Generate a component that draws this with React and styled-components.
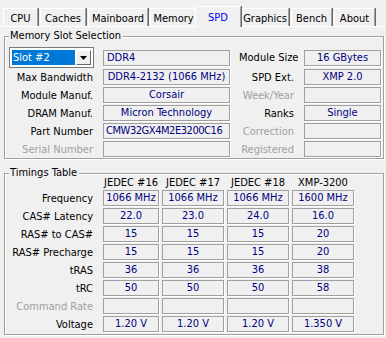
import React from 'react';
import styled, { createGlobalStyle } from 'styled-components';

const GlobalStyle = createGlobalStyle`
  html, body {
    margin: 0;
    padding: 0;
    background: #f0f0f0;
  }
  body {
    font-family: Tahoma, "DejaVu Sans Condensed", "Liberation Sans", sans-serif;
    font-size: 11px;
    color: #000;
  }
`;

const Window = styled.div`
  width: 386px;
  height: 338px;
  background: #f0f0f0;
  overflow: hidden;
`;

const TabBar = styled.div`
  display: flex;
  align-items: flex-end;
  height: 26px;
  padding-left: 3px;
`;

const Tab = styled.div`
  box-sizing: border-box;
  width: ${p => p.w}px;
  height: ${p => (p.active ? 21 : 18)}px;
  margin: ${p => (p.active ? '0 -2px -1px -2px' : '0 0 0 2px')};
  display: flex;
  align-items: center;
  justify-content: center;
  padding-top: ${p => (p.active ? 0 : 1)}px;
  border-top: 1px solid #fff;
  border-left: 1px solid #fff;
  border-right: 1px solid #a0a0a0;
  box-shadow: 1px 0 0 #696969;
  color: ${p => (p.active ? '#0000ff' : '#000')};
  background: #f0f0f0;
  position: relative;
  z-index: ${p => (p.active ? 2 : 1)};
  &:first-child {
    margin-left: 0;
  }
`;

const Panel = styled.div`
  border-top: 1px solid #fff;
  padding: 9px 2px 0 4px;
`;

const Group = styled.div`
  position: relative;
  border: 1px solid #a0a0a0;
  box-shadow: inset 1px 1px 0 #fff, 1px 1px 0 #fff;
  margin-top: ${p => p.mt || 0}px;
  padding: ${p => p.pad};
`;

const GroupTitle = styled.span`
  position: absolute;
  top: -8px;
  left: 4px;
  padding: 0 2px 0 1px;
  background: #f0f0f0;
  line-height: 14px;
`;

const SlotGrid = styled.div`
  display: grid;
  grid-template-columns: 85px 127px 56px 77px;
  grid-template-rows: 21px repeat(5, 18px);
  column-gap: 9px;
  align-items: center;
`;

const Label = styled.div`
  text-align: right;
  white-space: nowrap;
  padding-right: 1px;
  color: ${p => (p.dim ? '#a0a0a0' : '#000')};
`;

const Field = styled.div`
  box-sizing: border-box;
  height: 16px;
  border: 1px solid #a0a0a0;
  box-shadow: 1px 1px 0 #fff;
  color: #000080;
  line-height: 14px;
  white-space: nowrap;
  overflow: hidden;
  text-align: ${p => (p.left ? 'left' : 'center')};
  padding-left: ${p => (p.left ? (p.tight ? 2 : 3) : 0)}px;
  letter-spacing: ${p => (p.tight ? '-0.45px' : 'normal')};
`;

const Combo = styled.div`
  box-sizing: border-box;
  height: 21px;
  display: flex;
  align-items: stretch;
  border: 1px solid #7a7a7a;
  background: #fff;
  padding: 2px;
`;

const ComboValue = styled.div`
  flex: 1;
  background: #0078d7;
  color: #fff;
  display: flex;
  align-items: center;
  padding-left: 1px;
`;

const ComboButton = styled.div`
  box-sizing: border-box;
  width: 15px;
  margin-left: 1px;
  background: #f0f0f0;
  border-top: 1px solid #fff;
  border-left: 1px solid #fff;
  border-right: 1px solid #696969;
  border-bottom: 1px solid #696969;
  display: flex;
  align-items: center;
  justify-content: center;
`;

const TimingGrid = styled.div`
  display: grid;
  grid-template-columns: 85px repeat(4, 62px);
  grid-template-rows: 15px repeat(8, 18px);
  column-gap: 3px;
  align-items: center;
  & > :nth-child(5n + 2) {
    margin-left: 6px;
  }
`;

const Head = styled.div`
  text-align: center;
  white-space: nowrap;
  align-self: end;
`;

const slotRows = [
  ['Max Bandwidth', 'DDR4-2132 (1066 MHz)', false, 'SPD Ext.', 'XMP 2.0', false],
  ['Module Manuf.', 'Corsair', false, 'Week/Year', '', true],
  ['DRAM Manuf.', 'Micron Technology', false, 'Ranks', 'Single', false],
  ['Part Number', 'CMW32GX4M2E3200C16', false, 'Correction', '', true],
  ['Serial Number', '', true, 'Registered', '', true],
];

const timingRows = [
  ['Frequency', ['1066 MHz', '1066 MHz', '1066 MHz', '1600 MHz']],
  ['CAS# Latency', ['22.0', '23.0', '24.0', '16.0']],
  ['RAS# to CAS#', ['15', '15', '15', '20']],
  ['RAS# Precharge', ['15', '15', '15', '20']],
  ['tRAS', ['36', '36', '36', '38']],
  ['tRC', ['50', '50', '50', '58']],
  ['Command Rate', ['', '', '', ''], true],
  ['Voltage', ['1.20 V', '1.20 V', '1.20 V', '1.350 V']],
];

const tabs = [
  ['CPU', 35],
  ['Caches', 46],
  ['Mainboard', 60],
  ['Memory', 47],
  ['SPD', 46, true],
  ['Graphics', 48],
  ['Bench', 41],
  ['About', 41],
];

const App = () => (
  <>
    <GlobalStyle />
    <Window>
      <TabBar>
        {tabs.map(([name, w, active]) => (
          <Tab key={name} w={w} active={active}>
            {name}
          </Tab>
        ))}
      </TabBar>
      <Panel>
        <Group pad="10px 2px 0 4px">
          <GroupTitle>Memory Slot Selection</GroupTitle>
          <SlotGrid>
            <Combo>
              <ComboValue>Slot #2</ComboValue>
              <ComboButton>
                <svg width="7" height="4" viewBox="0 0 7 4">
                  <path d="M0 0h7L3.5 4z" fill="#000" />
                </svg>
              </ComboButton>
            </Combo>
            <Field left>DDR4</Field>
            <Label>Module Size</Label>
            <Field>16 GBytes</Field>
            {slotRows.map(([l, v, dl, r, rv, dr]) => (
              <React.Fragment key={l}>
                <Label dim={dl}>{l}</Label>
                <Field left={l === 'Part Number'} tight={l === 'Part Number'}>
                  {v}
                </Field>
                <Label dim={dr}>{r}</Label>
                <Field>{rv}</Field>
              </React.Fragment>
            ))}
          </SlotGrid>
        </Group>
        <Group mt={14} pad="0 2px 1px 4px">
          <GroupTitle>Timings Table</GroupTitle>
          <TimingGrid>
            <div />
            <Head>JEDEC #16</Head>
            <Head>JEDEC #17</Head>
            <Head>JEDEC #18</Head>
            <Head>XMP-3200</Head>
            {timingRows.map(([l, vals, dim]) => (
              <React.Fragment key={l}>
                <Label dim={dim}>{l}</Label>
                {vals.map((v, i) => (
                  <Field key={i}>{v}</Field>
                ))}
              </React.Fragment>
            ))}
          </TimingGrid>
        </Group>
      </Panel>
    </Window>
  </>
);

export default App;
